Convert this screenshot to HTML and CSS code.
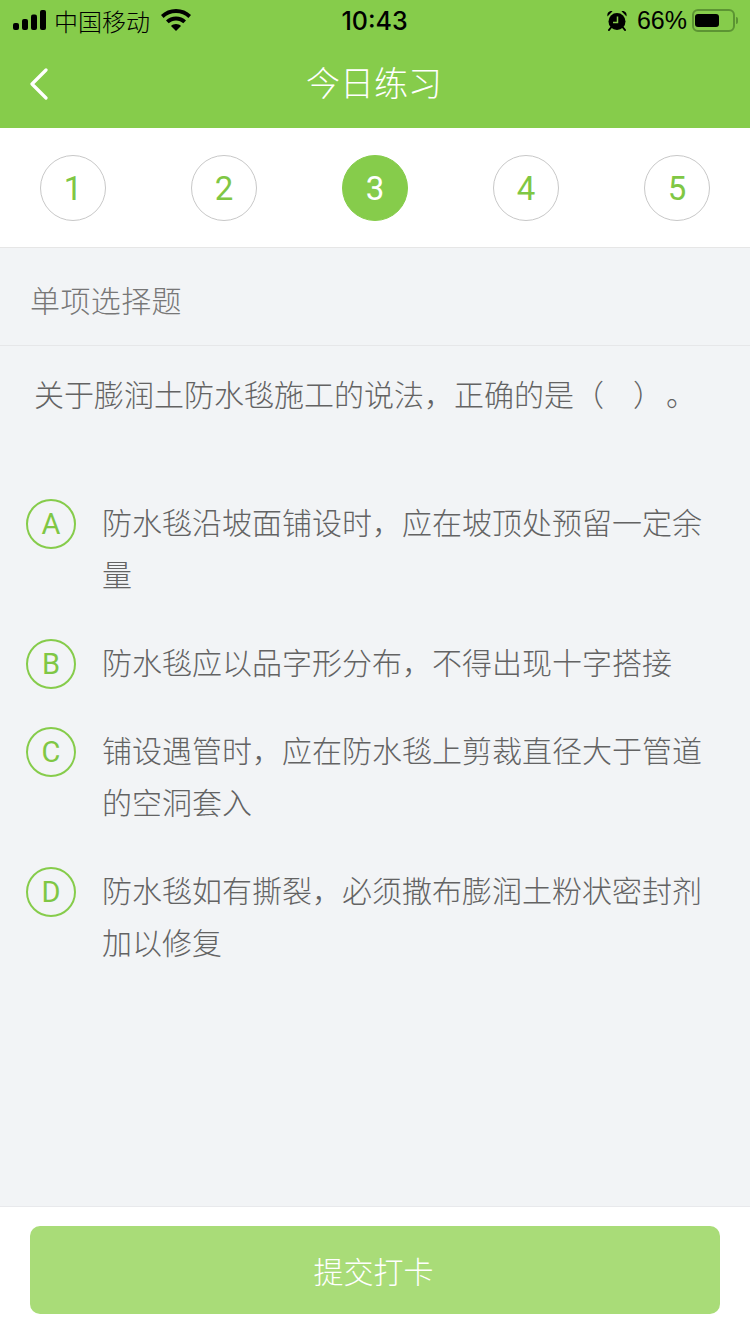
FILE: index.html
```html
<!DOCTYPE html>
<html lang="zh-CN">
<head>
  <meta charset="UTF-8">
  <meta name="viewport" content="width=device-width, initial-scale=1.0">
  <title>今日练习</title>
  <link rel="stylesheet" href="styles.css">
</head>
<body>
  <div class="page">
    <header class="header">
      <div class="status-bar">
        <div class="status-left">
          <svg class="signal-icon" width="34" height="20" viewBox="0 0 34 20" fill="#000">
            <rect x="0" y="13" width="6" height="7" rx="2"></rect>
            <rect x="9" y="9" width="6" height="11" rx="2"></rect>
            <rect x="18" y="4.5" width="6" height="15.5" rx="2"></rect>
            <rect x="27" y="0" width="6" height="20" rx="2"></rect>
          </svg>
          <span>中国移动</span>
          <svg class="wifi-icon" width="30" height="22" viewBox="0 0 30 22" fill="#000">
            <path d="M15 0C9 0 4 2.200 0 6l2.600 2.900C6 5.700 10.200 4 15 4s9 1.700 12.400 4.900L30 6C26 2.200 21 0 15 0z"></path>
            <path d="M15 7.500c-3.900 0-7.400 1.500-10 3.900l2.700 2.900c1.900-1.800 4.500-2.900 7.300-2.900s5.400 1.100 7.300 2.900l2.700-2.900c-2.600-2.400-6.100-3.900-10-3.900z"></path>
            <path d="M15 15c-2 0-3.700.7-5 1.900L15 22l5-5.100C18.700 15.700 17 15 15 15z"></path>
          </svg>
        </div>
        <div class="status-time">10:43</div>
        <div class="status-right">
          <svg class="alarm-icon" width="22" height="21" viewBox="0 0 22 21" fill="#000">
            <circle cx="11" cy="11.500" r="8.500"></circle>
            <path d="M1.500 6.500C.8 3 3 .6 6.500 1.200z M20.500 6.500C21.200 3 19 .6 15.500 1.200z"></path>
            <path d="M5 17.500l-2 2.500 M17 17.500l2 2.500" stroke="#000" stroke-width="2" stroke-linecap="round"></path>
            <path d="M11.500 6.500V12.500H7" fill="none" stroke="#86cc4b" stroke-width="1.500"></path>
          </svg>
          <span>66%</span>
          <div class="battery">
            <div class="battery-body"><div class="battery-level" style="width: 66%"></div></div>
            <div class="battery-tip"></div>
          </div>
        </div>
      </div>
      <div class="nav-bar">
        <svg class="back-icon" width="20" height="32" viewBox="0 0 20 32" fill="none" stroke="#fff" stroke-width="3.200" stroke-linecap="round" stroke-linejoin="round">
          <path d="M17 2L3 16l14 14"></path>
        </svg>
        <h1 class="nav-title">今日练习</h1>
      </div>
    </header>

    <div class="steps">
      <div class="step">1</div>
      <div class="step">2</div>
      <div class="step active">3</div>
      <div class="step">4</div>
      <div class="step">5</div>
    </div>

    <main class="content">
      <div class="question-type">单项选择题</div>
      <p class="question">关于膨润土防水毯施工的说法，正确的是（<span class="blank"></span>）<span class="period">。</span></p>
      <div class="options">
        <div class="option">
          <div class="option-key">A</div>
          <div class="option-text">防水毯沿坡面铺设时，应在坡顶处预留一定余量</div>
        </div>
        <div class="option">
          <div class="option-key">B</div>
          <div class="option-text">防水毯应以品字形分布，不得出现十字搭接</div>
        </div>
        <div class="option">
          <div class="option-key">C</div>
          <div class="option-text">铺设遇管时，应在防水毯上剪裁直径大于管道的空洞套入</div>
        </div>
        <div class="option">
          <div class="option-key">D</div>
          <div class="option-text">防水毯如有撕裂，必须撒布膨润土粉状密封剂加以修复</div>
        </div>
      </div>
    </main>

    <footer class="footer">
      <button class="submit-btn">提交打卡</button>
    </footer>
  </div>
</body>
</html>
```

FILE: styles.css
```css
* {
  box-sizing: border-box;
}

body {
  margin: 0;
  background-color: #f2f4f6;
  font-family: "Liberation Sans", "Noto Sans CJK SC", sans-serif;
}

.page {
  display: flex;
  flex-direction: column;
  width: 750px;
  height: 1334px;
  overflow: hidden;
}

.header {
  background-color: #86cc4b;
}

.status-bar {
  display: grid;
  grid-template-columns: 1fr auto 1fr;
  align-items: center;
  height: 40px;
  padding: 0 12px 0 13px;
  color: #000;
  font-size: 24px;
}

.status-left,
.status-right {
  display: flex;
  align-items: center;
}

.status-left span {
  margin-left: 7px;
  font-weight: 300;
}

.wifi-icon {
  margin-left: 11px;
}

.status-time {
  padding: 1px 2px 0 0;
  font-family: Inter, "Liberation Sans", sans-serif;
  font-size: 25px;
  font-weight: 500;
}

.status-right {
  justify-content: flex-end;
}

.status-right span {
  margin: 0 5px 0 9px;
  font-size: 25px;
}

.battery {
  display: flex;
  align-items: center;
}

.battery-body {
  width: 43px;
  height: 23px;
  padding: 3px 1px;
  border: 2px solid #5c9433;
  border-radius: 6px;
}

.battery-level {
  height: 100%;
  background-color: #000;
  border-radius: 3px;
}

.battery-tip {
  width: 2px;
  height: 7px;
  margin-left: 1px;
  background-color: #5c9433;
  border-radius: 0 2px 2px 0;
}

.nav-bar {
  position: relative;
  display: flex;
  align-items: center;
  justify-content: center;
  height: 88px;
}

.back-icon {
  position: absolute;
  left: 29px;
  top: 28px;
}

.nav-title {
  margin: 0 2px 0 0;
  color: #fff;
  font-size: 34px;
  font-weight: 300;
  line-height: 88px;
}

.steps {
  display: flex;
  justify-content: space-between;
  height: 120px;
  padding: 27px 40px 0;
  background-color: #fff;
  border-bottom: 1px solid #e6e6e6;
}

.step {
  display: flex;
  align-items: center;
  justify-content: center;
  width: 66px;
  height: 66px;
  color: #7fc744;
  font-family: Roboto, "Liberation Sans", sans-serif;
  font-size: 33px;
  font-weight: 400;
  border: 1px solid #c8c8c8;
  border-radius: 50%;
}

.step.active {
  color: #fff;
  background-color: #86cc4b;
  border-color: #86cc4b;
}

.content {
  flex: 1;
}

.question-type {
  height: 98px;
  padding-left: 30px;
  color: #777;
  font-size: 30px;
  font-weight: 300;
  letter-spacing: 0.4px;
  line-height: 108px;
  border-bottom: 1px solid #e6e7e9;
}

.question {
  display: flex;
  margin: 0;
  padding: 24px 30px 0 34px;
  color: #636363;
  font-size: 30px;
  font-weight: 300;
  line-height: 52px;
}

.blank {
  width: 29px;
}

.period {
  margin-left: 3px;
}

.options {
  display: flex;
  flex-direction: column;
  gap: 36px;
  margin-top: 76px;
  padding: 0 40px 0 26px;
}

.option {
  display: flex;
  gap: 26px;
}

.option-key {
  display: flex;
  flex-shrink: 0;
  align-items: center;
  justify-content: center;
  width: 50px;
  height: 50px;
  margin-top: 1px;
  color: #7fc744;
  font-family: Roboto, "Liberation Sans", sans-serif;
  font-size: 29px;
  font-weight: 400;
  border: 2px solid #86cc4b;
  border-radius: 50%;
}

.option-text {
  color: #636363;
  font-size: 30px;
  font-weight: 300;
  line-height: 52px;
}

.footer {
  height: 128px;
  padding: 19px 30px 0;
  background-color: #fff;
  border-top: 1px solid #e8e9ec;
}

.submit-btn {
  display: block;
  width: 100%;
  height: 88px;
  padding: 0 3px 0 0;
  color: #fff;
  font-family: inherit;
  font-size: 30px;
  font-weight: 300;
  background-color: #a9dc78;
  border: none;
  border-radius: 10px;
}
```
